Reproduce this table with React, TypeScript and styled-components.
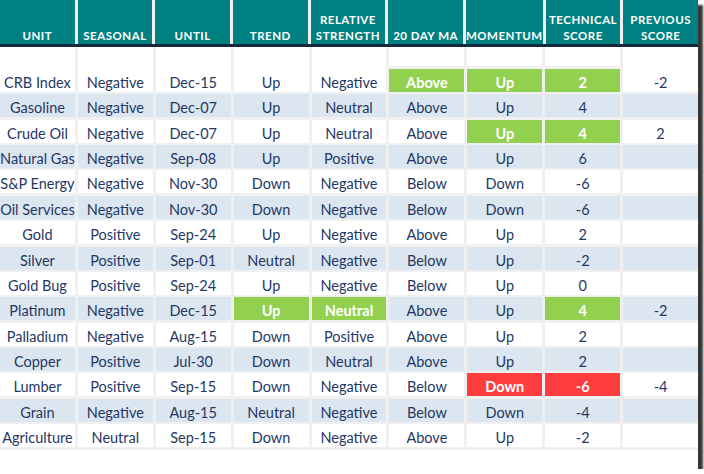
import React from 'react';
import styled, { createGlobalStyle, css } from 'styled-components';

const GlobalStyle = createGlobalStyle`
  html, body {
    margin: 0;
    padding: 0;
    background: #ffffff;
  }
`;

type Tone = 'up' | 'down' | undefined;

type Row = {
  cells: string[];
  marks?: Record<number, Tone>;
};

const headers = [
  ['UNIT'],
  ['SEASONAL'],
  ['UNTIL'],
  ['TREND'],
  ['RELATIVE', 'STRENGTH'],
  ['20 DAY MA'],
  ['MOMENTUM'],
  ['TECHNICAL', 'SCORE'],
  ['PREVIOUS', 'SCORE'],
];

const rows: Row[] = [
  { cells: ['CRB Index', 'Negative', 'Dec-15', 'Up', 'Negative', 'Above', 'Up', '2', '-2'], marks: { 5: 'up', 6: 'up', 7: 'up' } },
  { cells: ['Gasoline', 'Negative', 'Dec-07', 'Up', 'Neutral', 'Above', 'Up', '4', ''] },
  { cells: ['Crude Oil', 'Negative', 'Dec-07', 'Up', 'Neutral', 'Above', 'Up', '4', '2'], marks: { 6: 'up', 7: 'up' } },
  { cells: ['Natural Gas', 'Negative', 'Sep-08', 'Up', 'Positive', 'Above', 'Up', '6', ''] },
  { cells: ['S&P Energy', 'Negative', 'Nov-30', 'Down', 'Negative', 'Below', 'Down', '-6', ''] },
  { cells: ['Oil Services', 'Negative', 'Nov-30', 'Down', 'Negative', 'Below', 'Down', '-6', ''] },
  { cells: ['Gold', 'Positive', 'Sep-24', 'Up', 'Negative', 'Above', 'Up', '2', ''] },
  { cells: ['Silver', 'Positive', 'Sep-01', 'Neutral', 'Negative', 'Below', 'Up', '-2', ''] },
  { cells: ['Gold Bug', 'Positive', 'Sep-24', 'Up', 'Negative', 'Below', 'Up', '0', ''] },
  { cells: ['Platinum', 'Negative', 'Dec-15', 'Up', 'Neutral', 'Above', 'Up', '4', '-2'], marks: { 3: 'up', 4: 'up', 7: 'up' } },
  { cells: ['Palladium', 'Negative', 'Aug-15', 'Down', 'Positive', 'Above', 'Up', '2', ''] },
  { cells: ['Copper', 'Positive', 'Jul-30', 'Down', 'Neutral', 'Above', 'Up', '2', ''] },
  { cells: ['Lumber', 'Positive', 'Sep-15', 'Down', 'Negative', 'Below', 'Down', '-6', '-4'], marks: { 6: 'down', 7: 'down' } },
  { cells: ['Grain', 'Negative', 'Aug-15', 'Neutral', 'Negative', 'Below', 'Down', '-4', ''] },
  { cells: ['Agriculture', 'Neutral', 'Sep-15', 'Down', 'Negative', 'Above', 'Up', '-2', ''] },
];

const GAP = '#f0f0f0';
const toneColor = { up: '#92d050', down: '#ff3d3f' };

const Frame = styled.div`
  width: 698px;
  height: 469px;
  background: #ffffff;
  box-shadow: 5px 5px 2px #363636;
  display: flex;
  flex-direction: column;
  font-family: Lato, 'Open Sans', sans-serif;
`;

const Table = styled.div`
  background: ${GAP};
  padding-bottom: 3px;
`;

const Grid = styled.div`
  display: grid;
  grid-template-columns: repeat(9, 1fr);
  column-gap: 3px;
`;

const HeaderRow = styled(Grid)`
  height: 44px;
`;

const HeaderCell = styled.div`
  background: #008080;
  color: #ffffff;
  font-weight: 700;
  font-size: 11.5px;
  letter-spacing: 0.5px;
  line-height: 16px;
  text-align: center;
  display: flex;
  flex-direction: column;
  justify-content: flex-end;
  white-space: nowrap;
`;

const Rule = styled.div`
  height: 3px;
  background: #142a3c;
`;

const Body = styled(Grid)`
  row-gap: 2.36px;
`;

const Cell = styled.div<{ $blue: boolean; $tone?: Tone; $lead: boolean }>`
  height: ${(p) => (p.$lead ? '45px' : '23px')};
  box-sizing: border-box;
  padding-top: ${(p) => (p.$lead ? '26px' : '4px')};
  display: flex;
  align-items: center;
  justify-content: center;
  font-size: 14.5px;
  line-height: 19px;
  white-space: nowrap;
  color: #1f3864;
  background: ${(p) => (p.$blue ? '#dce6f1' : '#ffffff')};

  ${(p) =>
    p.$tone &&
    css`
      color: #ffffff;
      font-weight: 700;
      background: ${p.$lead
        ? `linear-gradient(to bottom, #ffffff 0 19px, ${GAP} 19px 22px, ${toneColor[p.$tone]} 22px)`
        : toneColor[p.$tone]};
    `}
`;

const Filler = styled.div`
  flex: 1;
  background: #ffffff;
`;

export default function App() {
  return (
    <>
      <GlobalStyle />
      <Frame>
        <Table>
          <HeaderRow>
            {headers.map((lines) => (
              <HeaderCell key={lines.join(' ')}>
                {lines.map((l) => (
                  <span key={l}>{l}</span>
                ))}
              </HeaderCell>
            ))}
          </HeaderRow>
          <Rule />
          <Body>
            {rows.map((row, r) =>
              row.cells.map((text, c) => (
                <Cell
                  key={`${r}-${c}`}
                  $blue={r % 2 === 1}
                  $lead={r === 0}
                  $tone={row.marks?.[c]}
                >
                  {text}
                </Cell>
              )),
            )}
          </Body>
        </Table>
        <Filler />
      </Frame>
    </>
  );
}
